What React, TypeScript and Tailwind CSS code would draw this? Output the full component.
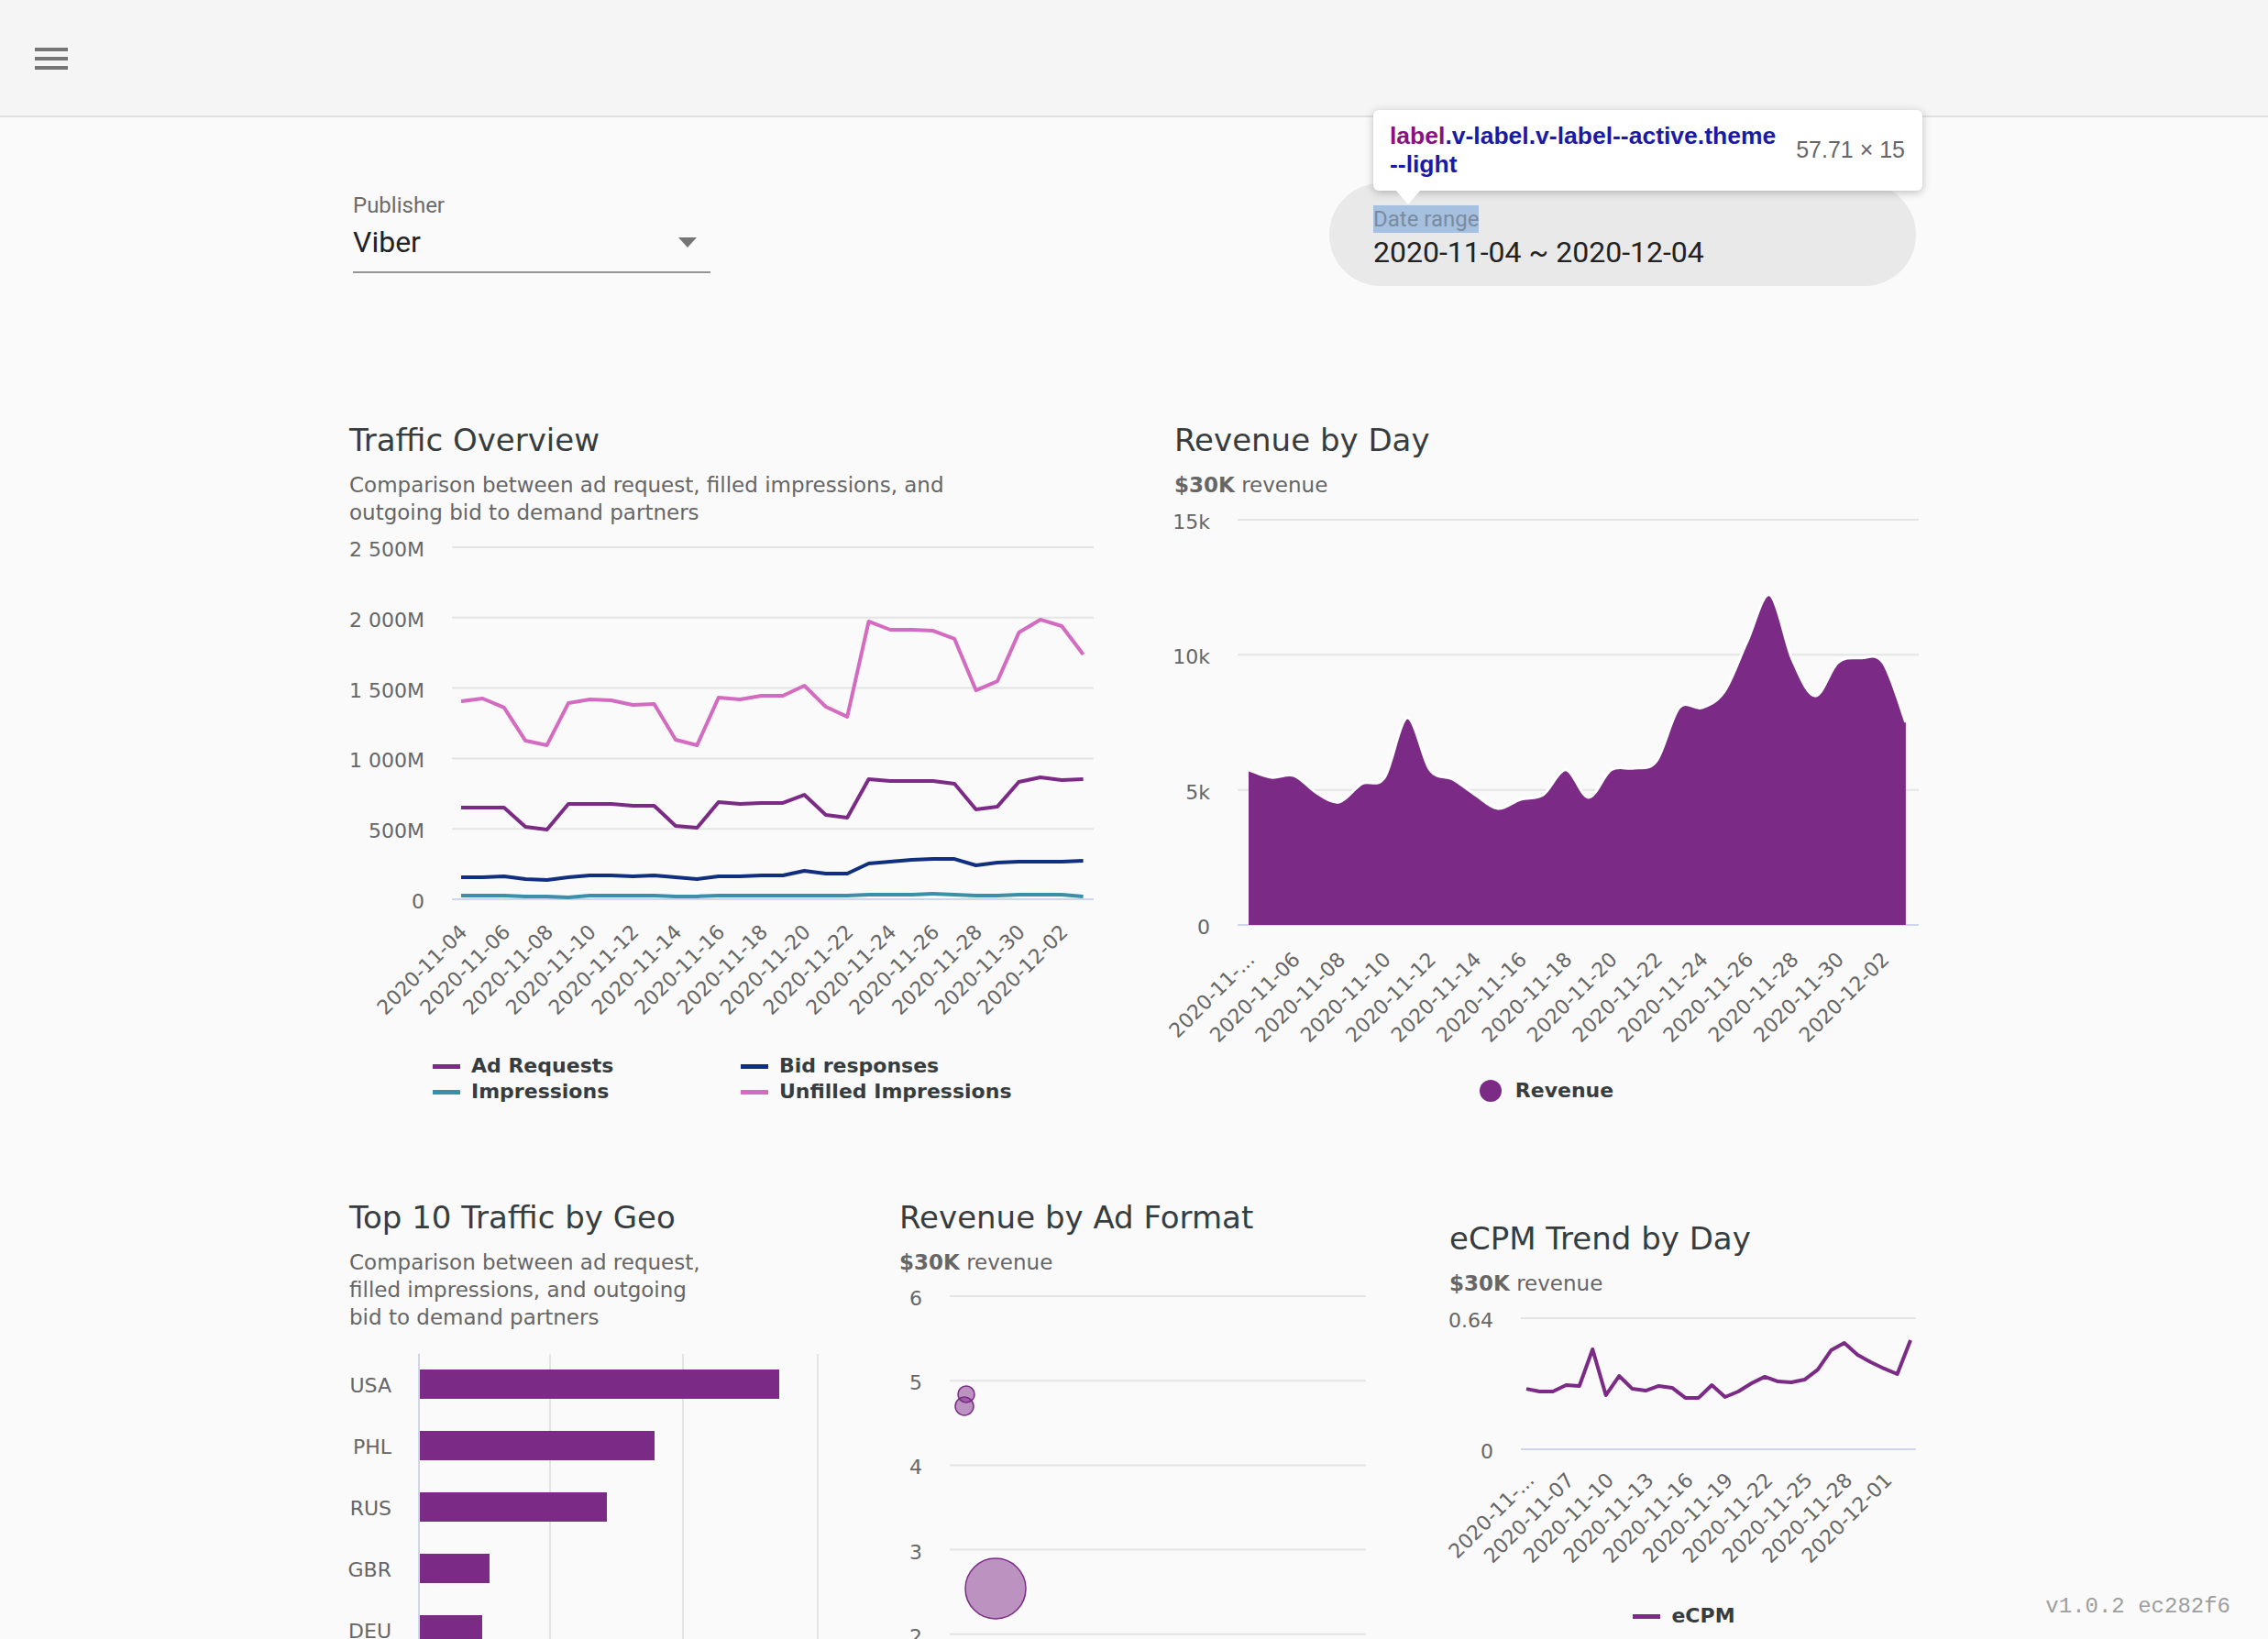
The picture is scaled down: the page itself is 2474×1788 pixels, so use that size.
import React from 'react';

const PURPLE = '#7b2a86';

const days = Array.from({ length: 30 }, (_, i) => {
  const d = new Date(Date.UTC(2020, 10, 4 + i));
  return d.toISOString().slice(0, 10);
});

// traffic series, millions
const adRequests = [651, 651, 651, 514, 495, 677, 677, 677, 664, 664, 521, 508, 690, 677, 684, 684, 742, 599, 579, 853, 840, 840, 840, 820, 638, 658, 833, 866, 846, 853];
const bidResponses = [156, 156, 163, 143, 137, 156, 169, 169, 163, 169, 156, 143, 163, 163, 169, 169, 202, 182, 182, 254, 267, 280, 286, 286, 241, 260, 267, 267, 267, 273];
const impressions = [26, 26, 26, 20, 20, 13, 26, 26, 26, 26, 20, 20, 26, 26, 26, 26, 26, 26, 26, 33, 33, 33, 39, 33, 26, 26, 33, 33, 33, 20];
const unfilled = [1406, 1426, 1361, 1126, 1094, 1393, 1419, 1413, 1380, 1387, 1133, 1094, 1432, 1419, 1445, 1445, 1517, 1367, 1296, 1973, 1914, 1914, 1907, 1849, 1484, 1549, 1894, 1986, 1940, 1738];

// revenue, thousands
const revenue = [5.74, 5.46, 5.53, 4.89, 4.55, 5.23, 5.46, 7.67, 5.74, 5.4, 4.82, 4.31, 4.65, 4.82, 5.74, 4.72, 5.74, 5.8, 6.07, 8.04, 8.04, 8.65, 10.49, 12.22, 9.81, 8.48, 9.71, 9.88, 9.71, 7.5];

const ecpm = [0.295, 0.282, 0.282, 0.313, 0.309, 0.488, 0.264, 0.358, 0.295, 0.286, 0.309, 0.3, 0.251, 0.251, 0.313, 0.255, 0.282, 0.322, 0.354, 0.331, 0.327, 0.34, 0.389, 0.483, 0.519, 0.461, 0.425, 0.394, 0.367, 0.533];

const geo = [
  { code: 'USA', w: 392 },
  { code: 'PHL', w: 256 },
  { code: 'RUS', w: 204 },
  { code: 'GBR', w: 76 },
  { code: 'DEU', w: 68 },
];

function smoothPath(pts: [number, number][]) {
  let d = `M${pts[0][0]},${pts[0][1]}`;
  for (let i = 0; i < pts.length - 1; i++) {
    const p0 = pts[i - 1] || pts[i];
    const p1 = pts[i];
    const p2 = pts[i + 1];
    const p3 = pts[i + 2] || p2;
    const c1x = p1[0] + (p2[0] - p0[0]) / 6;
    const c1y = p1[1] + (p2[1] - p0[1]) / 6;
    const c2x = p2[0] - (p3[0] - p1[0]) / 6;
    const c2y = p2[1] - (p3[1] - p1[1]) / 6;
    d += ` C${c1x},${c1y} ${c2x},${c2y} ${p2[0]},${p2[1]}`;
  }
  return d;
}

function line(values: number[], fx: (i: number) => number, fy: (v: number) => number) {
  return values.map((v, i) => `${fx(i)},${fy(v)}`).join(' ');
}

function XLabels({ items, y }: { items: { x: number; label: string }[]; y: number }) {
  return (
    <g fill="#666" fontSize="22">
      {items.map((it) => (
        <text key={it.x} x={it.x} y={y} textAnchor="end" transform={`rotate(-45 ${it.x} ${y})`}>
          {it.label}
        </text>
      ))}
    </g>
  );
}

function YLabel({ x, y, children }: { x: number; y: number; children: React.ReactNode }) {
  return (
    <text x={x} y={y + 10} textAnchor="end" fontSize="22" fill="#666">
      {children}
    </text>
  );
}

function TrafficChart() {
  const tx = (i: number) => 122 + i * 23.4;
  const ty = (v: number) => 407 - (v * 384) / 2500;
  const ticks = ['0', '500M', '1 000M', '1 500M', '2 000M', '2 500M'];
  const labels = days.filter((_, i) => i % 2 === 0).map((d, k) => ({ x: tx(k * 2) + 8, label: d }));
  return (
    <svg width="812" height="575" className="block overflow-visible">
      {ticks.map((t, k) => (
        <g key={t}>
          <line x1="112" x2="812" y1={407 - k * 76.8} y2={407 - k * 76.8} stroke={k === 0 ? '#cdd6ea' : '#e4e4e4'} strokeWidth="2" />
          <YLabel x={82} y={407 - k * 76.8}>{t}</YLabel>
        </g>
      ))}
      <polyline points={line(impressions, tx, ty)} fill="none" stroke="#3b8fa8" strokeWidth="4" strokeLinejoin="round" />
      <polyline points={line(bidResponses, tx, ty)} fill="none" stroke="#10307f" strokeWidth="4" strokeLinejoin="round" />
      <polyline points={line(adRequests, tx, ty)} fill="none" stroke={PURPLE} strokeWidth="4" strokeLinejoin="round" />
      <polyline points={line(unfilled, tx, ty)} fill="none" stroke="#d36bc0" strokeWidth="4" strokeLinejoin="round" />
      <XLabels items={labels} y={444} />
    </svg>
  );
}

function RevenueChart() {
  const rx = (i: number) => 81 + i * 24.72;
  const ry = (v: number) => 465 - (v * 442) / 15;
  const pts = revenue.map((v, i) => [rx(i), ry(v)] as [number, number]);
  const curve = smoothPath(pts);
  const area = `${curve} L${rx(29)},465 L${rx(0)},465 Z`;
  const ticks = ['0', '5k', '10k', '15k'];
  const labels = days
    .filter((_, i) => i % 2 === 0)
    .map((d, k) => ({ x: rx(k * 2) + 8, label: k === 0 ? '2020-11-...' : d }));
  return (
    <svg width="812" height="632" className="block overflow-visible">
      {ticks.map((t, k) => (
        <g key={t}>
          <line x1="69" x2="812" y1={465 - k * 147.33} y2={465 - k * 147.33} stroke={k === 0 ? '#cdd6ea' : '#e4e4e4'} strokeWidth="2" />
          <YLabel x={39} y={465 - k * 147.33}>{t}</YLabel>
        </g>
      ))}
      <path d={area} fill={PURPLE} />
      <path d={curve} fill="none" stroke="#fff" strokeWidth="3" />
      <XLabels items={labels} y={504} />
    </svg>
  );
}

function GeoChart() {
  return (
    <svg width="512" height="336" className="block overflow-visible">
      {[219, 364, 511].map((x) => (
        <line key={x} x1={x} x2={x} y1="25" y2="336" stroke="#e4e4e4" strokeWidth="2" />
      ))}
      <line x1="76" x2="76" y1="25" y2="336" stroke="#cdd6ea" strokeWidth="2" />
      {geo.map((g, i) => (
        <g key={g.code}>
          <rect x="77" y={42 + i * 67} width={g.w} height="32" fill={PURPLE} />
          <YLabel x={46} y={42 + i * 67 + 15}>{g.code}</YLabel>
        </g>
      ))}
    </svg>
  );
}

function AdFormatChart() {
  const ticks = ['6', '5', '4', '3', '2'];
  return (
    <svg width="512" height="396" className="block overflow-visible">
      {ticks.map((t, k) => (
        <g key={t}>
          <line x1="55" x2="509" y1={22 + k * 92.2} y2={22 + k * 92.2} stroke="#e4e4e4" strokeWidth="2" />
          <YLabel x={25} y={22 + k * 92.2}>{t}</YLabel>
        </g>
      ))}
      <circle cx="73" cy="129" r="9" fill={PURPLE} fillOpacity="0.5" stroke={PURPLE} strokeWidth="1.5" />
      <circle cx="71" cy="142" r="10" fill={PURPLE} fillOpacity="0.5" stroke={PURPLE} strokeWidth="1.5" />
      <circle cx="105" cy="341" r="33" fill={PURPLE} fillOpacity="0.5" stroke={PURPLE} strokeWidth="1.5" />
    </svg>
  );
}

function EcpmChart() {
  const ex = (i: number) => 84 + i * 14.45;
  const ey = (v: number) => 166 - (v * 143) / 0.64;
  const labels = days
    .filter((_, i) => i % 3 === 0)
    .map((d, k) => ({ x: ex(k * 3) + 10, label: k === 0 ? '2020-11-...' : d }));
  return (
    <svg width="512" height="334" className="block overflow-visible">
      <line x1="78" x2="509" y1="23" y2="23" stroke="#e4e4e4" strokeWidth="2" />
      <line x1="78" x2="509" y1="166" y2="166" stroke="#cdd6ea" strokeWidth="2" />
      <YLabel x={48} y={23}>0.64</YLabel>
      <YLabel x={48} y={166}>0</YLabel>
      <polyline points={line(ecpm, ex, ey)} fill="none" stroke={PURPLE} strokeWidth="4" strokeLinejoin="round" />
      <XLabels items={labels} y={201} />
    </svg>
  );
}

function LegendLine({ color, label }: { color: string; label: string }) {
  return (
    <div className="flex items-center">
      <span className="w-[30px] h-[5px]" style={{ backgroundColor: color }} />
      <span className="ml-[12px] font-bold text-[22px] leading-[28px] text-[#373d3f]">{label}</span>
    </div>
  );
}

function CardTitle({ title, children }: { title: string; children: React.ReactNode }) {
  return (
    <>
      <h2 className="text-[34px] leading-[40px] text-[#373d3f]">{title}</h2>
      <div className="mt-[14px] text-[23px] leading-[30px] text-[#666]">{children}</div>
    </>
  );
}

export default function App() {
  return (
    <div className="relative h-[1788px] overflow-hidden bg-[#fafafa] font-['Roboto',sans-serif]">
      {/* Top bar */}
      <header className="h-[128px] bg-[#f5f5f5] border-b-2 border-[#e0e0e0] pl-[38px] pt-[52px]">
        <div className="flex flex-col gap-[6px] w-[36px]">
          <span className="h-[4px] bg-[#757575]" />
          <span className="h-[4px] bg-[#757575]" />
          <span className="h-[4px] bg-[#757575]" />
        </div>
      </header>

      <main className="w-[1712px] mx-auto">
        {/* Filters */}
        <div className="flex items-start mt-[72px]">
          <div className="ml-[4px] w-[390px] pt-[12px]">
            <div className="text-[24px] leading-[24px] text-[#6b6b6b]">Publisher</div>
            <div className="mt-[8px] h-[40px] flex items-center justify-between pr-[15px]">
              <span className="text-[32px] leading-[40px] text-[#222]">Viber</span>
              <span className="w-0 h-0 border-l-[10px] border-r-[10px] border-t-[11px] border-l-transparent border-r-transparent border-t-[#757575]" />
            </div>
            <div className="mt-[12px] h-[2px] bg-[#949494]" />
          </div>
          <div className="ml-auto mr-[3px] w-[640px] h-[112px] rounded-full bg-[#e9e9e9] pl-[48px] pt-[24px]">
            <div className="w-[115px] h-[30px] bg-[#a6c0df] text-[24px] leading-[30px] text-[#7a8ba0] whitespace-nowrap">Date range</div>
            <div className="mt-[1px] text-[32px] leading-[40px] text-[#222]">2020-11-04 ~ 2020-12-04</div>
          </div>
        </div>

        {/* Row 1 */}
        <div className="mt-[148px] grid grid-cols-2 gap-x-[88px] font-['DejaVu_Sans',sans-serif]">
          <section>
            <CardTitle title="Traffic Overview">
              Comparison between ad request, filled impressions, and
              <br />
              outgoing bid to demand partners
            </CardTitle>
            <TrafficChart />
            <div className="grid grid-cols-[336px_1fr] pl-[91px]">
              <LegendLine color={PURPLE} label="Ad Requests" />
              <LegendLine color="#10307f" label="Bid responses" />
              <LegendLine color="#3b8fa8" label="Impressions" />
              <LegendLine color="#d36bc0" label="Unfilled Impressions" />
            </div>
          </section>
          <section>
            <CardTitle title="Revenue by Day">
              <b>$30K</b> revenue
            </CardTitle>
            <RevenueChart />
            <div className="flex justify-center items-center">
              <span className="w-[24px] h-[24px] rounded-full" style={{ backgroundColor: PURPLE }} />
              <span className="ml-[15px] font-bold text-[22px] leading-[28px] text-[#373d3f]">Revenue</span>
            </div>
          </section>
        </div>

        {/* Row 2 */}
        <div className="mt-[103px] grid grid-cols-3 gap-x-[88px] items-start font-['DejaVu_Sans',sans-serif]">
          <section>
            <CardTitle title="Top 10 Traffic by Geo">
              Comparison between ad request,
              <br />
              filled impressions, and outgoing
              <br />
              bid to demand partners
            </CardTitle>
            <GeoChart />
          </section>
          <section>
            <CardTitle title="Revenue by Ad Format">
              <b>$30K</b> revenue
            </CardTitle>
            <AdFormatChart />
          </section>
          <section className="mt-[23px]">
            <CardTitle title="eCPM Trend by Day">
              <b>$30K</b> revenue
            </CardTitle>
            <EcpmChart />
            <div className="flex justify-center">
              <LegendLine color={PURPLE} label="eCPM" />
            </div>
          </section>
        </div>
      </main>

      {/* Devtools inspect tooltip */}
      <div className="absolute left-[1498px] top-[120px] w-[599px] h-[88px] bg-white rounded-[6px] shadow-[0_2px_10px_rgba(0,0,0,0.25)] flex items-center pl-[18px] pr-[19px] font-['Liberation_Sans',sans-serif]">
        <div className="flex-1 text-[26.5px] leading-[31px] font-bold text-[#1a1aa6]">
          <span className="text-[#881280]">label</span>.v-label.v-label--active.theme
          <br />
          --light
        </div>
        <div className="text-[25px] text-[#666]">57.71 × 15</div>
      </div>
      <div className="absolute left-[1522px] top-[207px] w-0 h-0 border-l-[14px] border-r-[14px] border-t-[16px] border-l-transparent border-r-transparent border-t-white" />

      <div className="absolute right-[41px] top-[1738px] font-['Liberation_Mono',monospace] text-[24px] leading-[30px] text-[#9e9e9e]">
        v1.0.2 ec282f6
      </div>
    </div>
  );
}
